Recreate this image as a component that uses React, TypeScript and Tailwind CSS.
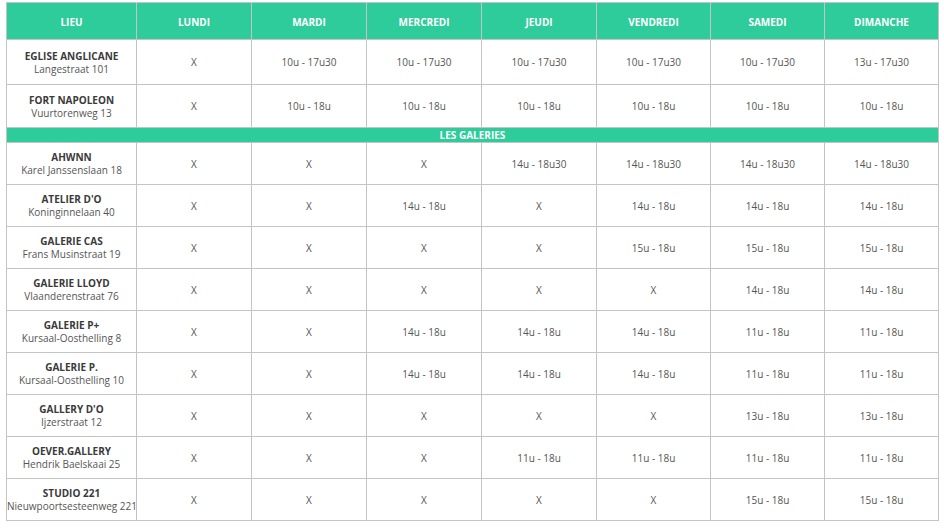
const days = ["LUNDI", "MARDI", "MERCREDI", "JEUDI", "VENDREDI", "SAMEDI", "DIMANCHE"];

type Row = { name: string; addr: string; hours: string[] };

const main: Row[] = [
  { name: "EGLISE ANGLICANE", addr: "Langestraat 101", hours: ["X", "10u - 17u30", "10u - 17u30", "10u - 17u30", "10u - 17u30", "10u - 17u30", "13u - 17u30"] },
  { name: "FORT NAPOLEON", addr: "Vuurtorenweg 13", hours: ["X", "10u - 18u", "10u - 18u", "10u - 18u", "10u - 18u", "10u - 18u", "10u - 18u"] },
];

const galleries: Row[] = [
  { name: "AHWNN", addr: "Karel Janssenslaan 18", hours: ["X", "X", "X", "14u - 18u30", "14u - 18u30", "14u - 18u30", "14u - 18u30"] },
  { name: "ATELIER D'O", addr: "Koninginnelaan 40", hours: ["X", "X", "14u - 18u", "X", "14u - 18u", "14u - 18u", "14u - 18u"] },
  { name: "GALERIE CAS", addr: "Frans Musinstraat 19", hours: ["X", "X", "X", "X", "15u - 18u", "15u - 18u", "15u - 18u"] },
  { name: "GALERIE LLOYD", addr: "Vlaanderenstraat 76", hours: ["X", "X", "X", "X", "X", "14u - 18u", "14u - 18u"] },
  { name: "GALERIE P+", addr: "Kursaal-Oosthelling 8", hours: ["X", "X", "14u - 18u", "14u - 18u", "14u - 18u", "11u - 18u", "11u - 18u"] },
  { name: "GALERIE P.", addr: "Kursaal-Oosthelling 10", hours: ["X", "X", "14u - 18u", "14u - 18u", "14u - 18u", "11u - 18u", "11u - 18u"] },
  { name: "GALLERY D'O", addr: "Ijzerstraat 12", hours: ["X", "X", "X", "X", "X", "13u - 18u", "13u - 18u"] },
  { name: "OEVER.GALLERY", addr: "Hendrik Baelskaai 25", hours: ["X", "X", "X", "11u - 18u", "11u - 18u", "11u - 18u", "11u - 18u"] },
  { name: "STUDIO 221", addr: "Nieuwpoortsesteenweg 221", hours: ["X", "X", "X", "X", "X", "15u - 18u", "15u - 18u"] },
];

const widths = ["w-[130px]", "w-[115px]", "w-[115px]", "w-[115px]", "w-[115px]", "w-[114px]", "w-[114px]", "w-[114px]"];

const RowView = ({ row, h }: { row: Row; h: string }) => (
  <tr className={h}>
    <td className="border border-[#c4c4c4] text-center leading-[13px] pt-[1px]">
      <div className="font-bold text-[#3a3a3a] whitespace-nowrap">{row.name}</div>
      <div className="text-[#555] whitespace-nowrap">{row.addr}</div>
    </td>
    {row.hours.map((t, i) => (
      <td key={i} className="border border-[#c4c4c4] text-center text-[#555] pt-[1px]">
        {t}
      </td>
    ))}
  </tr>
);

export default function App() {
  return (
    <div className="bg-white w-[944px] h-[528px] pt-[2px] pl-[6px] font-['Open_Sans',sans-serif] text-[10px]">
      <table className="border-collapse table-fixed w-[932px]">
        <colgroup>
          {widths.map((w, i) => (
            <col key={i} className={w} />
          ))}
        </colgroup>
        <thead>
          <tr className="h-[37px] bg-[#2ecc9b] text-white font-bold">
            <th className="border border-[#c4c4c4] font-bold pt-[2px]">LIEU</th>
            {days.map((d) => (
              <th key={d} className="border border-[#c4c4c4] font-bold pt-[2px]">
                {d}
              </th>
            ))}
          </tr>
        </thead>
        <tbody>
          <RowView row={main[0]} h="h-[45px]" />
          <RowView row={main[1]} h="h-[43px]" />
          <tr className="h-[15px] bg-[#2ecc9b]">
            <td colSpan={8} className="border border-[#c4c4c4] text-center text-white font-bold leading-[13px]">
              LES GALERIES
            </td>
          </tr>
          {galleries.map((g) => (
            <RowView key={g.name} row={g} h="h-[42px]" />
          ))}
        </tbody>
      </table>
    </div>
  );
}
